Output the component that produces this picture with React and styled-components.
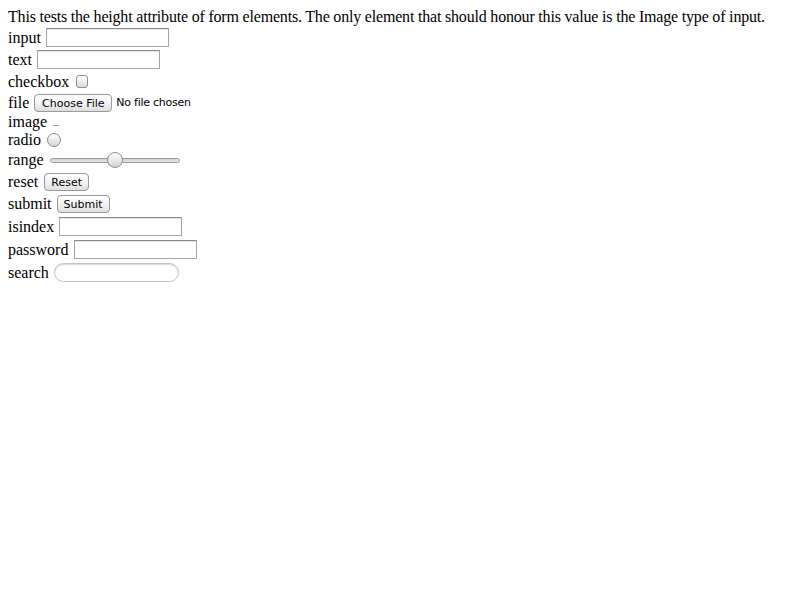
import React from 'react';
import styled, { createGlobalStyle } from 'styled-components';

const GlobalStyle = createGlobalStyle`
  html, body {
    margin: 0;
    background: #ffffff;
  }
  body {
    padding: 8px;
    font-family: "Liberation Serif", "Times New Roman", serif;
    font-size: 16px;
    color: #000000;
  }
`;

const Page = styled.div`
  display: flex;
  flex-direction: column;
`;

const Intro = styled.p`
  margin: 0;
  height: 18px;
  line-height: 18px;
  letter-spacing: -0.19px;
  white-space: nowrap;
`;

const Row = styled.div`
  display: flex;
  align-items: center;
  height: ${({ h }) => h}px;
  line-height: 18px;
`;

const Label = styled.span`
  margin-right: ${({ gap }) => (gap === undefined ? 4 : gap)}px;
  white-space: nowrap;
`;

const TextBox = styled.input`
  box-sizing: border-box;
  width: 123px;
  height: 19px;
  margin: 0;
  padding: 1px 2px;
  border: 1px solid #a6a6a6;
  border-top-color: #8c8c8c;
  box-shadow: inset 0 1px 0 #e6e6e6;
  background: #fff;
  font: 13px "DejaVu Sans", sans-serif;
  outline: none;
`;

const SearchBox = styled(TextBox)`
  width: 125px;
  border-radius: 10px;
  border-color: #c4c4c4;
  box-shadow: inset 0 1px 1px #d8d8d8;
`;

const Check = styled.span`
  display: inline-block;
  box-sizing: border-box;
  width: 12px;
  height: 13px;
  border: 1px solid #8f8f8f;
  border-radius: 3px;
  background: linear-gradient(#ffffff, #dcdcdc);
`;

const Radio = styled.span`
  display: inline-block;
  box-sizing: border-box;
  width: 14px;
  height: 14px;
  border: 1px solid #8a8a8a;
  border-radius: 50%;
  background: linear-gradient(#ffffff, #d6d6d6);
`;

const Button = styled.span`
  display: inline-flex;
  align-items: center;
  justify-content: center;
  box-sizing: border-box;
  width: ${({ w }) => w}px;
  height: 18px;
  border: 1px solid #9a9a9a;
  border-radius: 4px;
  background: linear-gradient(#ffffff 0%, #f2f2f2 55%, #dedede 100%);
  font: 11px "DejaVu Sans", "Noto Sans", sans-serif;
  color: #000;
  padding-top: 1px;
`;

const FileNote = styled.span`
  margin-left: 4px;
  font: 11px "DejaVu Sans", "Noto Sans", sans-serif;
  letter-spacing: -0.25px;
`;

const BrokenImage = styled.span`
  display: inline-block;
  width: 6px;
  height: 1px;
  margin-top: 8px;
  background: #9a9a9a;
`;

const RangeTrack = styled.span`
  position: relative;
  display: inline-block;
  box-sizing: border-box;
  width: 130px;
  height: 5px;
  margin-left: 2px;
  margin-top: 1px;
  border: 1px solid #9c9c9c;
  border-radius: 3px;
  background: linear-gradient(#d0d0d0, #e8e8e8);
`;

const RangeThumb = styled.span`
  position: absolute;
  left: 56px;
  top: -7px;
  box-sizing: border-box;
  width: 16px;
  height: 16px;
  border: 1px solid #8e8e8e;
  border-radius: 50%;
  background: linear-gradient(#ffffff, #d4d4d4);
`;

export default function App() {
  return (
    <>
      <GlobalStyle />
      <Page>
        <Intro>
          This tests the height attribute of form elements. The only element
          that should honour this value is the Image type of input.
        </Intro>
        <Row h={23}>
          <Label gap={5}>input</Label>
          <TextBox type="text" />
        </Row>
        <Row h={21}>
          <Label gap={5}>text</Label>
          <TextBox type="text" />
        </Row>
        <Row h={23}>
          <Label gap={7}>checkbox</Label>
          <Check />
        </Row>
        <Row h={19}>
          <Label gap={5}>file</Label>
          <Button w={78}>Choose File</Button>
          <FileNote>No file chosen</FileNote>
        </Row>
        <Row h={19}>
          <Label gap={6}>image</Label>
          <BrokenImage />
        </Row>
        <Row h={18}>
          <Label gap={6}>radio</Label>
          <Radio />
        </Row>
        <Row h={22}>
          <Label gap={4}>range</Label>
          <RangeTrack>
            <RangeThumb />
          </RangeTrack>
        </Row>
        <Row h={22}>
          <Label gap={6}>reset</Label>
          <Button w={45}>Reset</Button>
        </Row>
        <Row h={22}>
          <Label gap={5}>submit</Label>
          <Button w={53}>Submit</Button>
        </Row>
        <Row h={23}>
          <Label gap={5}>isindex</Label>
          <TextBox type="text" />
        </Row>
        <Row h={23}>
          <Label gap={6}>password</Label>
          <TextBox type="password" />
        </Row>
        <Row h={23}>
          <Label gap={5}>search</Label>
          <SearchBox type="search" />
        </Row>
      </Page>
    </>
  );
}
